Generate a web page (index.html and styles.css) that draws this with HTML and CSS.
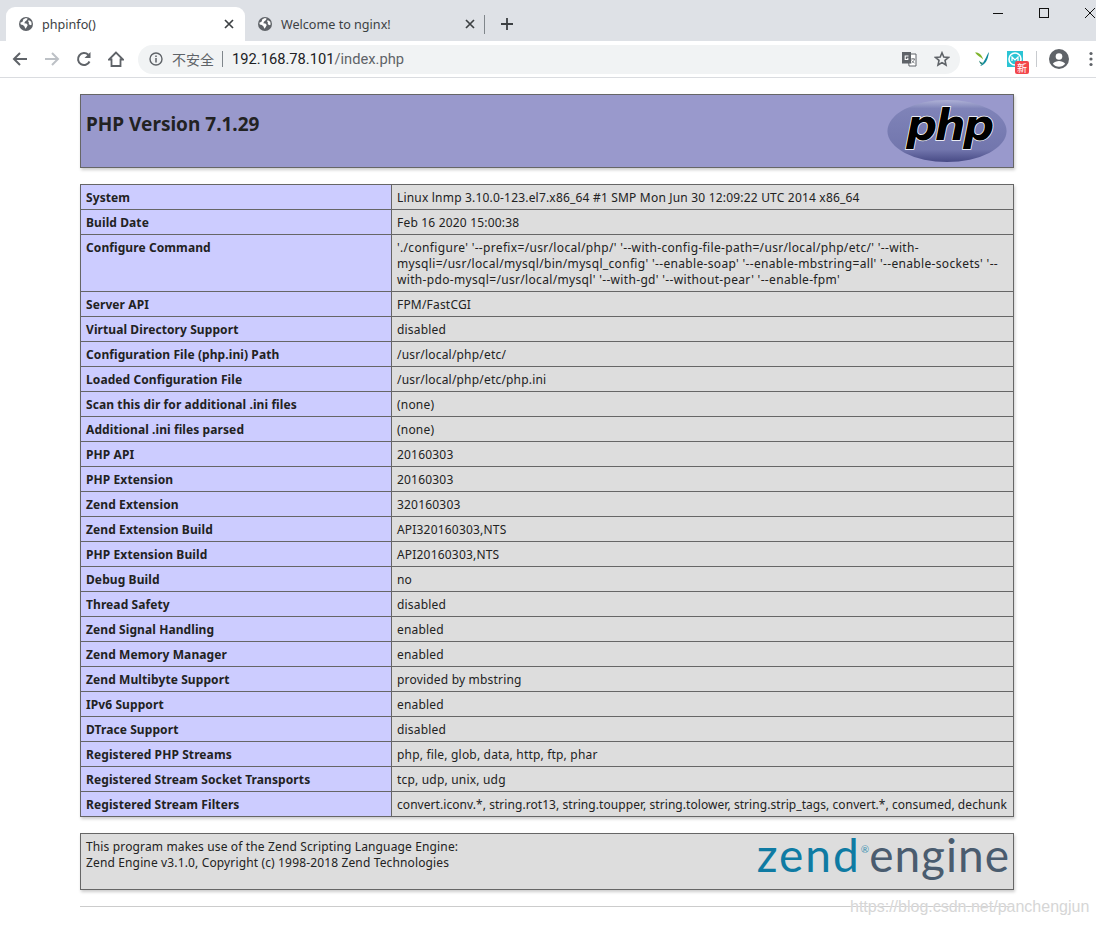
FILE: index.html
```html
<!DOCTYPE html>
<html lang="zh">
<head>
<meta charset="utf-8">
<title>phpinfo()</title>
<link rel="stylesheet" href="styles.css">
</head>
<body>
<svg width="0" height="0" class="defs">
  <defs>
    <symbol id="globe" viewBox="0 0 16 16">
      <circle cx="8" cy="8" r="8" fill="#5f6368"/>
      <path d="M1.500 6.500 4 5.500l1-3L8 1l2 1-1.500 2L7 5 6 7l2.500.5L10 9l-1.500 3-1.500 1.500-.5-2.500-2-2-2.500-.5zM11 3.500l3 2 .5 3-1.500 1-2-1.500.5-1.500-1-1z" fill="#fff"/>
    </symbol>
    <symbol id="close" viewBox="0 0 10 10">
      <path d="M1 1l8 8M9 1 1 9" stroke="#3c4043" stroke-width="1.700" fill="none"/>
    </symbol>
  </defs>
</svg>

<header class="chrome">
  <div class="strip">
    <div class="tab tab-active">
      <svg class="fav"><use href="#globe"/></svg>
      <span class="tab-title">phpinfo()</span>
      <svg class="tab-x"><use href="#close"/></svg>
    </div>
    <div class="tab">
      <svg class="fav"><use href="#globe"/></svg>
      <span class="tab-title">Welcome to nginx!</span>
      <svg class="tab-x"><use href="#close"/></svg>
    </div>
    <span class="tab-sep"></span>
    <svg class="newtab" viewBox="0 0 14 14"><path d="M7 1v12M1 7h12" stroke="#3c4043" stroke-width="1.800"/></svg>
    <div class="winctl">
      <svg class="win" viewBox="0 0 12 12"><path d="M1 6.500h10" stroke="#111" stroke-width="1"/></svg>
      <svg class="win" viewBox="0 0 12 12"><rect x="1.500" y="1.500" width="9" height="9" fill="none" stroke="#111"/></svg>
      <svg class="win" viewBox="0 0 12 12"><path d="M1 1l10 10M11 1 1 11" stroke="#111" stroke-width="1"/></svg>
    </div>
  </div>
  <div class="toolbar">
    <svg class="nav" viewBox="0 0 16 16"><path d="M15 8H2M8 2 2 8l6 6" fill="none" stroke="#5f6368" stroke-width="2"/></svg>
    <svg class="nav" viewBox="0 0 16 16"><path d="M1 8h13M8 2l6 6-6 6" fill="none" stroke="#bdc1c6" stroke-width="2"/></svg>
    <svg class="nav" viewBox="0 0 16 16"><path d="M13.500 10.500A6 6 0 1 1 12.300 3.800" fill="none" stroke="#5f6368" stroke-width="2"/><path d="M14.500 1v6h-6z" fill="#5f6368"/></svg>
    <svg class="nav" viewBox="0 0 16 16"><path d="M8 1.500 1 8.500h2.500V15h9V8.500H15z" fill="none" stroke="#5f6368" stroke-width="1.800" stroke-linejoin="miter"/></svg>
    <div class="omnibox">
      <svg class="info" viewBox="0 0 14 14"><circle cx="7" cy="7" r="6" fill="none" stroke="#5f6368" stroke-width="1.400"/><path d="M7 6v4.500M7 3.500v1.500" stroke="#5f6368" stroke-width="1.500"/></svg>
      <span class="insecure">不安全</span>
      <span class="omni-sep"></span>
      <span class="url"><span class="host">192.168.78.101</span>/index.php</span>
      <svg class="translate" viewBox="0 0 16 16"><path d="M7 3h8v12H8z" fill="#fff" stroke="#5f6368"/><rect x="1" y="1" width="9" height="11.500" fill="#5f6368"/><path d="M7.500 5H4.200v3.500h2.600V6.800" fill="none" stroke="#fff" stroke-width="1.100"/><path d="M10 8h4M12 7v1M13.500 8c-.5 2-2 3.500-3 4M10.500 9.500c.5 1 2 2 3 2.500" fill="none" stroke="#5f6368" stroke-width=".8"/></svg>
      <svg class="star" viewBox="0 0 16 16"><path d="M8 1.800 9.800 6l4.700.4-3.500 3 1 4.600L8 11.600 4 14l1-4.600-3.500-3L6.200 6z" fill="none" stroke="#5f6368" stroke-width="1.600"/></svg>
    </div>
    <svg class="ext ext-leaf" viewBox="0 0 16 16"><path d="M1 1.500c3-.5 7 1.500 8 7C7 6 3.500 5 1 1.500z" fill="#7fb42d"/><path d="M15 1c-3 4-4 10-9 14 5-1 8-6 9-14z" fill="#0f8a9c"/><path d="M5 9.500c1 1.500 3 2.500 4 2l-1 2c-1.500 0-2.500-2-3-4z" fill="#1d7f6e"/></svg>
    <div class="ext-badge">
      <svg class="ext" viewBox="0 0 16 16"><rect width="16" height="16" fill="#2bc4d4"/><circle cx="8" cy="8" r="6" fill="none" stroke="#fff" stroke-width="1.600"/><path d="M5 10V6l3 3 3-3v4" fill="none" stroke="#fff" stroke-width="1.200"/></svg>
      <span class="badge">新</span>
    </div>
    <span class="tool-sep"></span>
    <svg class="avatar" viewBox="0 0 20 20"><circle cx="10" cy="10" r="10" fill="#5f6368"/><circle cx="10" cy="7.500" r="3.300" fill="#fff"/><path d="M3.800 14.800c1.500-2 4-2.800 6.200-2.800s4.700.8 6.200 2.800c-1.500 1.800-3.700 2.900-6.200 2.900s-4.700-1.100-6.200-2.900z" fill="#fff"/></svg>
    <svg class="dots" viewBox="0 0 4 16"><circle cx="2" cy="2.500" r="1.600" fill="#5f6368"/><circle cx="2" cy="8" r="1.600" fill="#5f6368"/><circle cx="2" cy="13.500" r="1.600" fill="#5f6368"/></svg>
  </div>
</header>

<main class="page">
  <table class="tbl">
    <tr class="h">
      <td>
        <svg class="php-logo" viewBox="0 0 122 65">
          <defs>
            <linearGradient id="phpg" x1="0" y1="0" x2="0" y2="1">
              <stop offset="0" stop-color="#aeb1d6"/>
              <stop offset=".14" stop-color="#7f83b8"/>
              <stop offset=".8" stop-color="#7276ad"/>
              <stop offset="1" stop-color="#474a85"/>
            </linearGradient>
          </defs>
          <ellipse cx="61" cy="32.500" rx="60.500" ry="31.500" fill="url(#phpg)"/>
          <text x="63" y="42" class="php-word" text-anchor="middle">php</text>
        </svg>
        <h1 class="title">PHP Version 7.1.29</h1>
      </td>
    </tr>
  </table>

  <table class="tbl">
    <tr><td class="e">System</td><td class="v">Linux lnmp 3.10.0-123.el7.x86_64 #1 SMP Mon Jun 30 12:09:22 UTC 2014 x86_64</td></tr>
    <tr><td class="e">Build Date</td><td class="v">Feb 16 2020 15:00:38</td></tr>
    <tr><td class="e">Configure Command</td><td class="v v-wide">'./configure' '--prefix=/usr/local/php/' '--with-config-file-path=/usr/local/php/etc/' '--with-mysqli=/usr/local/mysql/bin/mysql_config' '--enable-soap' '--enable-mbstring=all' '--enable-sockets' '--with-pdo-mysql=/usr/local/mysql' '--with-gd' '--without-pear' '--enable-fpm'</td></tr>
    <tr><td class="e">Server API</td><td class="v">FPM/FastCGI</td></tr>
    <tr><td class="e">Virtual Directory Support</td><td class="v">disabled</td></tr>
    <tr><td class="e">Configuration File (php.ini) Path</td><td class="v">/usr/local/php/etc/</td></tr>
    <tr><td class="e">Loaded Configuration File</td><td class="v">/usr/local/php/etc/php.ini</td></tr>
    <tr><td class="e">Scan this dir for additional .ini files</td><td class="v">(none)</td></tr>
    <tr><td class="e">Additional .ini files parsed</td><td class="v">(none)</td></tr>
    <tr><td class="e">PHP API</td><td class="v">20160303</td></tr>
    <tr><td class="e">PHP Extension</td><td class="v">20160303</td></tr>
    <tr><td class="e">Zend Extension</td><td class="v">320160303</td></tr>
    <tr><td class="e">Zend Extension Build</td><td class="v">API320160303,NTS</td></tr>
    <tr><td class="e">PHP Extension Build</td><td class="v">API20160303,NTS</td></tr>
    <tr><td class="e">Debug Build</td><td class="v">no</td></tr>
    <tr><td class="e">Thread Safety</td><td class="v">disabled</td></tr>
    <tr><td class="e">Zend Signal Handling</td><td class="v">enabled</td></tr>
    <tr><td class="e">Zend Memory Manager</td><td class="v">enabled</td></tr>
    <tr><td class="e">Zend Multibyte Support</td><td class="v">provided by mbstring</td></tr>
    <tr><td class="e">IPv6 Support</td><td class="v">enabled</td></tr>
    <tr><td class="e">DTrace Support</td><td class="v">disabled</td></tr>
    <tr><td class="e">Registered PHP Streams</td><td class="v">php, file, glob, data, http, ftp, phar</td></tr>
    <tr><td class="e">Registered Stream Socket Transports</td><td class="v">tcp, udp, unix, udg</td></tr>
    <tr><td class="e">Registered Stream Filters</td><td class="v v-tight">convert.iconv.*, string.rot13, string.toupper, string.tolower, string.strip_tags, convert.*, consumed, dechunk</td></tr>
  </table>

  <table class="tbl">
    <tr>
      <td class="v footer-cell">
        <div class="zend-logo"><span class="zend">zend</span><span class="reg">®</span><span class="engine">engine</span></div>
        This program makes use of the Zend Scripting Language Engine:<br>Zend Engine v3.1.0, Copyright (c) 1998-2018 Zend Technologies
      </td>
    </tr>
  </table>
  <hr class="rule">
</main>
<div class="watermark">https://blog.csdn.net/panchengjun</div>
</body>
</html>
```
FILE: styles.css
```css
* { box-sizing: border-box; }
html, body { margin: 0; padding: 0; height: 925px; overflow: hidden; background: #fff; }
body { font-family: "Noto Sans", "Open Sans", sans-serif; color: #222; position: relative; }
.defs { position: absolute; }

/* browser chrome */
.chrome { height: 78px; border-bottom: 1px solid #dadce0; }
.strip { height: 41px; background: #dee1e6; display: flex; align-items: flex-end; padding-left: 6px; }
.tab { width: 239px; height: 34px; display: flex; align-items: center; padding: 0 8px 0 13px; border-radius: 9px 9px 0 0; }
.tab-active { background: #fff; padding-right: 10px; }
.tab-title { flex: 1; margin-left: 9px; font-size: 12.600px; color: #3c4043; white-space: nowrap; }
.fav { width: 14px; height: 14px; flex: none; }
.tab-x { width: 10px; height: 10px; flex: none; margin-right: 1px; }
.tab-sep { width: 1px; height: 19px; background: #80868b; margin: 0 0 7px 0; }
.newtab { width: 14px; height: 14px; margin: 0 0 10px 15px; }
.winctl { margin-left: auto; align-self: flex-start; display: flex; gap: 34px; padding: 7px 0 0; }
.win { width: 12px; height: 12px; }

.toolbar { height: 36px; display: flex; align-items: center; padding: 0 0 0 12px; background: #fff; }
.nav { width: 16px; height: 16px; margin-right: 16px; flex: none; }
.omnibox { width: 822px; height: 29px; margin-left: -2px; background: #f1f3f4; border-radius: 15px; display: flex; align-items: center; padding: 0 10px 0 11px; }
.info { width: 14px; height: 14px; flex: none; }
.insecure { margin-left: 9px; font-size: 14px; color: #5f6368; font-family: "Noto Sans CJK SC", sans-serif; }
.omni-sep { width: 1px; height: 16px; background: #80868b; margin: 0 9px 0 8px; }
.url { font-size: 14.700px; color: #5f6368; font-family: Roboto, sans-serif; flex: 1; }
.host { color: #202124; }
.translate { width: 16px; height: 16px; margin-right: 17px; }
.star { width: 16px; height: 16px; }
.ext { width: 16px; height: 16px; display: block; }
.ext-leaf { margin-left: 14px; }
.ext-badge { position: relative; margin-left: 17px; }
.badge { position: absolute; left: 8px; top: 10px; width: 14px; height: 13px; background: #f2474c; border-radius: 2px; color: #fff; font: 10px/13px "Noto Sans CJK SC", sans-serif; text-align: center; }
.tool-sep { width: 1px; height: 16px; background: #c8cbcf; margin: 0 12px 0 13px; }
.avatar { width: 20px; height: 20px; }
.dots { width: 4px; height: 16px; margin-left: 20px; }

/* phpinfo page */
.page { width: 934px; margin: 0 0 0 80px; padding: 16px 0 0; font-size: 12px; line-height: 16px; letter-spacing: .19px; }
.tbl { width: 934px; border-collapse: collapse; table-layout: fixed; margin-bottom: 16px; box-shadow: 1px 2px 3px #ccc; }
.tbl td { border: 1px solid #666; padding: 5px 5px 3px; vertical-align: top; }
.h td { background: #99c; height: 73px; }
.e { width: 311px; background: #ccf; font-weight: 700; letter-spacing: .09px; }
.v { background: #ddd; }
.tbl .v-tight { letter-spacing: .06px; }
.tbl .v-wide { letter-spacing: .33px; }
.title { margin: 12px 0 0; font-size: 19px; line-height: 24px; font-weight: 700; letter-spacing: 0; }
.php-logo { float: right; width: 122px; height: 64px; margin-top: -1px; }
.php-word { font: italic 700 44px "DejaVu Sans", sans-serif; fill: #000; stroke: #fff; stroke-width: 1.500px; paint-order: stroke; letter-spacing: -2.500px; }
.footer-cell { height: 56px; letter-spacing: .14px; }
.zend-logo { float: right; height: 46px; margin-right: -2px; display: flex; align-items: baseline; font-family: Lato, sans-serif; font-size: 46px; line-height: 32px; }
.zend { color: #0f7ba3; letter-spacing: 2px; }
.reg { color: #3d93b3; font-size: 10px; line-height: 10px; align-self: flex-start; margin-top: 5px; letter-spacing: 0; }
.engine { color: #4a5c6f; letter-spacing: 1px; }
.rule { margin: 0; height: 1px; border: 0; background: #ccc; }
.watermark { position: absolute; left: 850px; top: 897px; font: 16px/20px "Liberation Sans", sans-serif; color: #d6d6d6; white-space: nowrap; text-shadow: 0 0 1px #fff; }
```
